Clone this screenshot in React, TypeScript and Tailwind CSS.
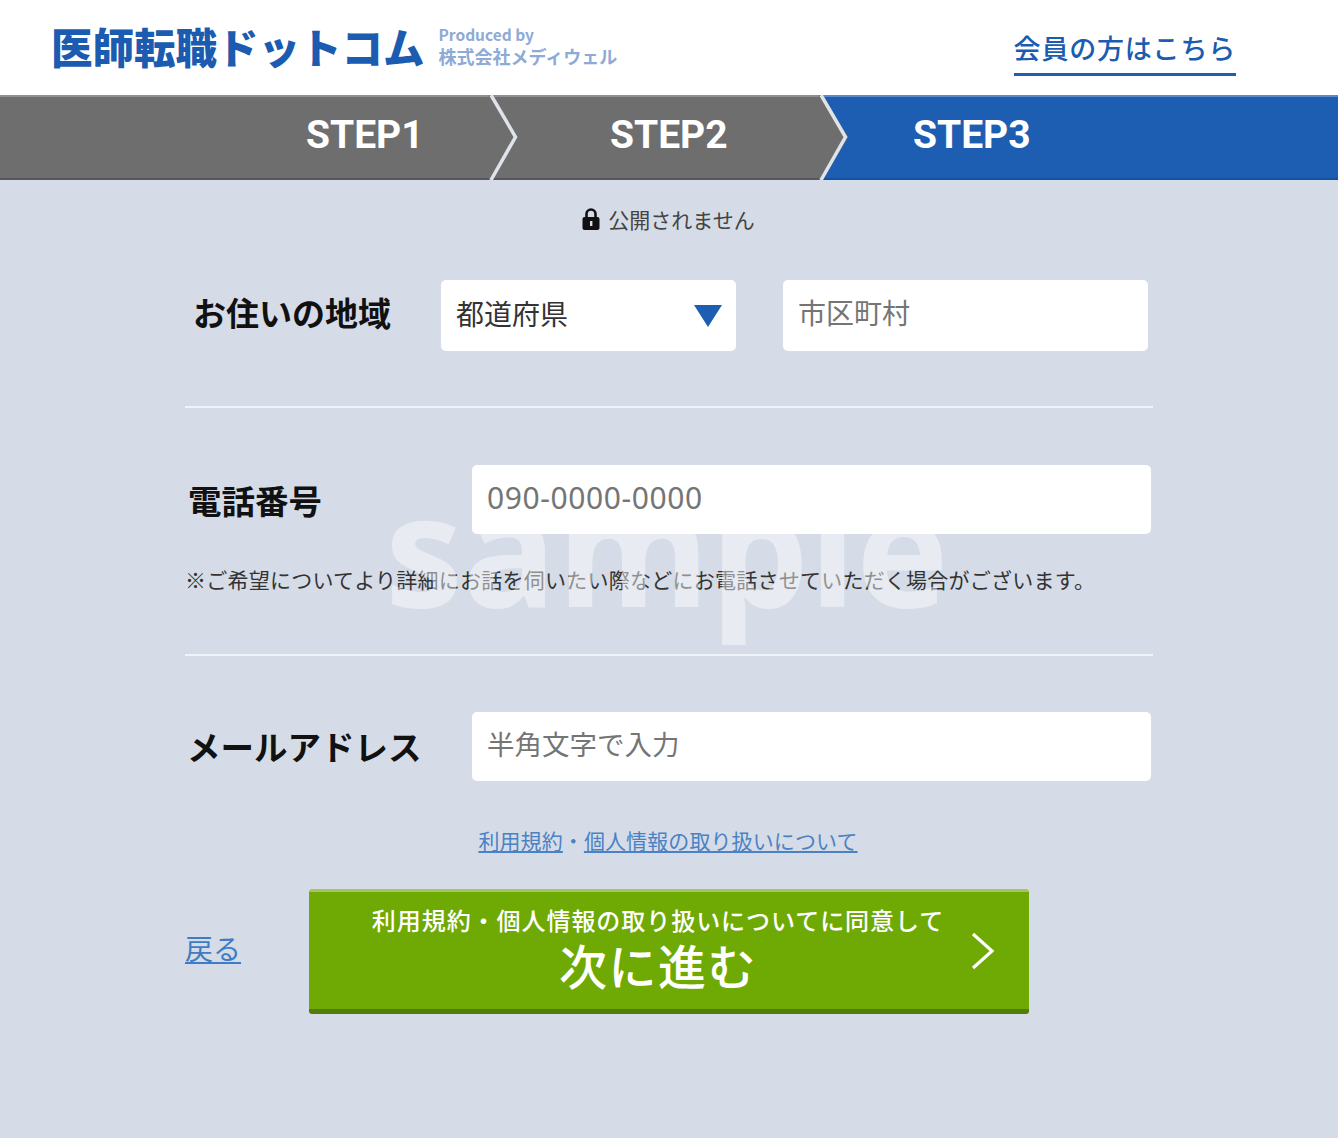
const jp = "font-['Noto_Sans_CJK_JP','Noto_Sans',sans-serif]";

function Chevron() {
  return (
    <svg className="absolute left-[-2px] top-[-2px] z-10 h-[85px] w-[32px]" viewBox="0 0 32 85">
      <polygon points="0,0 4,0 29,42 4,85 0,85" fill="#6e6e6e" />
      <polyline points="2,0 26.5,42 2,85" fill="none" stroke="#dfe3ea" strokeWidth="3.5" />
    </svg>
  );
}

function Field({ placeholder, className = "" }: { placeholder: string; className?: string }) {
  return (
    <div className={`flex items-center rounded-[5px] bg-white pl-[15px] text-[#757575] ${className}`}>
      {placeholder}
    </div>
  );
}

export default function App() {
  return (
    <div className={`relative h-[1138px] w-[1340px] overflow-hidden bg-white pr-[2px] ${jp}`}>
      <header className="flex h-[95px] items-center justify-between bg-white pl-[51px] pr-[102px]">
        <div className="flex items-center gap-[14px]">
          <span className="-mt-[1px] text-[41.5px] leading-none font-black text-[#1b5cb0]">医師転職ドットコム</span>
          <div className="-mt-[2px] flex flex-col text-[#8eaad6]">
            <span className="text-[15.5px] leading-[18px] font-bold">Produced by</span>
            <span className="text-[18px] leading-[26px] font-bold">株式会社メディウェル</span>
          </div>
        </div>
        <a className="mt-[9px] border-b-[3px] border-[#1f5fb3] pb-[5px] text-[27px] leading-[40px] tracking-[0.8px] font-medium text-[#1b5cb0]">会員の方はこちら</a>
      </header>

      <div className="flex h-[85px] text-[39px] font-bold text-white">
        <div className="flex h-full w-[491px] items-center border-y-2 border-t-[#8f8f8f] border-b-[#55585c] bg-[#6e6e6e] pb-[4px] pl-[306px] font-['Roboto',sans-serif]">STEP1</div>
        <div className="relative flex h-full w-[330px] items-center border-y-2 border-t-[#8f8f8f] border-b-[#55585c] bg-[#6e6e6e] pb-[4px] pl-[119px] font-['Roboto',sans-serif]">
          <Chevron />
          STEP2
        </div>
        <div className="relative flex h-full flex-1 items-center border-y-2 border-t-[#5c8ac6] border-b-[#1450a3] bg-[#1e5eb2] pb-[4px] pl-[92px] font-['Roboto',sans-serif]">
          <Chevron />
          STEP3
        </div>
      </div>

      <main className="h-[958px] bg-[#d5dce7] pt-[24px]">
        <div className="flex items-center justify-center gap-[7px] pr-[2px] text-[21px] leading-[30px] text-[#444]">
          <svg className="-mt-[1px] h-[24px] w-[20px]" viewBox="0 0 20 24">
            <path d="M5.5 11V7a4.5 4.5 0 0 1 9 0v4" fill="none" stroke="#111" strokeWidth="2.6" />
            <rect x="1.5" y="10" width="17" height="13" rx="2" fill="#111" />
            <rect x="9" y="14" width="2.4" height="5" fill="#d5dce7" />
          </svg>
          公開されません
        </div>

        <div className="mx-[185px] mt-[46px]">
          <section className="flex h-[128px] items-start border-b-2 border-[#f0f3f7]">
            <div className="w-[256px] pl-[8px] text-[33px] leading-[64px] font-bold text-[#111]">お住いの地域</div>
            <div className="flex h-[71px] w-[295px] items-center justify-between rounded-[5px] bg-white pl-[15px] pr-[14px] text-[28px] text-[#333]">
              <span className="-mt-[6px]">都道府県</span>
              <span className="h-0 w-0 border-x-[14px] border-t-[22px] border-x-transparent border-t-[#1e5eb2]" />
            </div>
            <Field placeholder="市区町村" className="ml-[47px] h-[71px] w-[365px] pb-[8px] text-[28px]" />
          </section>

          <section className="h-[248px] border-b-2 border-[#f0f3f7] pt-[57px]">
            <div className="flex items-start">
              <div className="w-[287px] pl-[3px] text-[33.5px] leading-[70px] font-bold text-[#111]">電話番号</div>
              <Field placeholder="090-0000-0000" className="h-[69px] w-[679px] pb-[4px] font-['Noto_Sans',sans-serif] text-[30px] tracking-[0.6px]" />
            </div>
            <p className="mt-[29px] text-[21px] leading-[30px] tracking-[0.24px] text-[#333]">※ご希望についてより詳細にお話を伺いたい際などにお電話させていただく場合がございます。</p>
          </section>

          <section className="flex items-start pt-[56px]">
            <div className="w-[287px] pl-[2px] text-[33.5px] leading-[68px] font-bold text-[#111]">メールアドレス</div>
            <Field placeholder="半角文字で入力" className="h-[69px] w-[679px] pb-[6px] text-[27.5px]" />
          </section>

          <div className="mt-[44px] flex justify-center pr-[2px] text-[21px] leading-[30px] tracking-[0.1px] text-[#4a82c4]">
            <a className="underline">利用規約</a>
            <span>・</span>
            <a className="underline">個人情報の取り扱いについて</a>
          </div>

          <div className="mt-[34px] flex items-center">
            <a className="w-[124px] pb-[7px] text-[28px] leading-[40px] text-[#3f7cc4] underline">戻る</a>
            <button className={`relative flex h-[125px] w-[720px] flex-col items-center rounded-[3px] border-t-[3px] border-b-[5px] border-t-[#a3c560] border-b-[#4f7d08] bg-[#6eaa03] pt-[11px] pr-[22px] text-white ${jp}`}>
              <span className="text-[24px] leading-[34px] font-medium tracking-[0.95px]">利用規約・個人情報の取り扱いについてに同意して</span>
              <span className="text-[48px] leading-[55px] font-medium tracking-[1.5px]">次に進む</span>
              <svg className="absolute right-[33px] top-[40px] h-[38px] w-[26px]" viewBox="0 0 26 38">
                <polyline points="3,2 22,19 3,36" fill="none" stroke="white" strokeWidth="3.2" />
              </svg>
            </button>
          </div>
        </div>
      </main>

      <div className="pointer-events-none absolute left-[385px] top-[447px] font-['Open_Sans',sans-serif] text-[156px] leading-[200px] font-bold text-white opacity-45">sample</div>
    </div>
  );
}
